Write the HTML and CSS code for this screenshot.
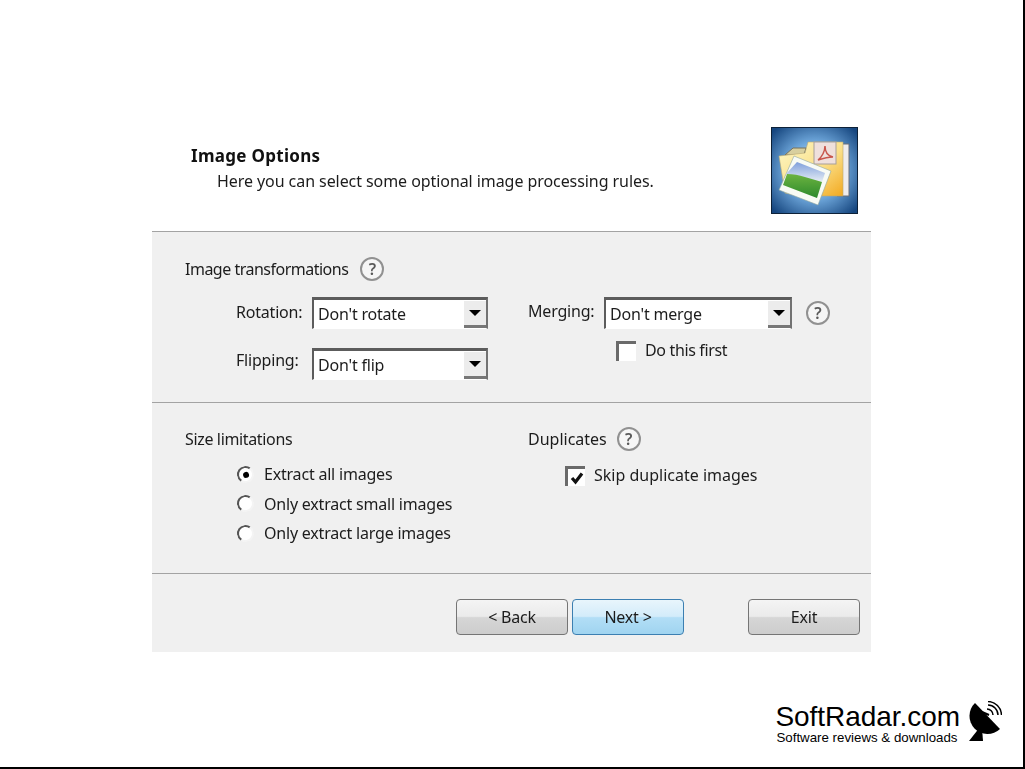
FILE: index.html
```html
<!DOCTYPE html>
<html lang="en">
<head>
<meta charset="utf-8">
<title>Image Options</title>
<link rel="stylesheet" href="styles.css">
</head>
<body>
<div class="page">
  <main class="dialog">
    <header class="head">
      <div class="head-text">
        <h1 class="title">Image Options</h1>
        <p class="subtitle">Here you can select some optional image processing rules.</p>
      </div>
      <svg class="app-icon" viewBox="0 0 87 87" aria-hidden="true">
        <defs>
          <radialGradient id="bg" cx="50%" cy="50%" r="66%">
            <stop offset="0" stop-color="#e4f0fa"/>
            <stop offset="0.5" stop-color="#6fa8dc"/>
            <stop offset="1" stop-color="#16467f"/>
          </radialGradient>
          <linearGradient id="folder" x1="0" y1="0" x2="1" y2="1">
            <stop offset="0" stop-color="#fdf8c8"/>
            <stop offset="0.55" stop-color="#fbe08a"/>
            <stop offset="1" stop-color="#f2a920"/>
          </linearGradient>
          <linearGradient id="sky" x1="0" y1="0" x2="0" y2="1">
            <stop offset="0" stop-color="#7f9fdc"/>
            <stop offset="1" stop-color="#e6eef4"/>
          </linearGradient>
          <linearGradient id="grass" x1="0" y1="0" x2="0" y2="1">
            <stop offset="0" stop-color="#6cb340"/>
            <stop offset="1" stop-color="#2d8a2c"/>
          </linearGradient>
        </defs>
        <rect x="0.5" y="0.5" width="86" height="86" fill="url(#bg)" stroke="#0d2138"/>
        <path d="M70 17h8v52H66z" fill="#efecec" stroke="#6b6f78" stroke-width="1"/>
        <path d="M14 28l8-7h13l-2 7z" fill="#d8cf9e" stroke="#77705a" stroke-width="1"/>
        <path d="M8 29L34 26l3-11h35v54H30L14 66z" fill="url(#folder)" stroke="#b8aa74" stroke-width="0.6"/>
        <rect x="43" y="15" width="22" height="22" fill="#efe0dc" stroke="#a89f9a"/>
        <path d="M47 33c4-3 7-9 7-14 0 6 3 10 8 11-4 0-9 1-15 3z" fill="none" stroke="#c8564c" stroke-width="1.500"/>
        <path d="M23 29L60 44 47 78 8 63z" fill="#f8fbf4" stroke="#8fa6a0" stroke-width="0.6"/>
        <path d="M26 35L54 46 51 55 15 47z" fill="url(#sky)"/>
        <path d="M16 47C28 47 40 52 51 55L46 71 12 58z" fill="url(#grass)"/>
      </svg>
    </header>

    <section class="panel panel-top">
      <div class="col">
        <div class="heading"><span class="tight-l">Image transformations</span><span class="help">?</span></div>
        <div class="fields">
          <span class="lbl">Rotation:</span>
          <div class="combo combo-s"><span class="combo-val">Don't rotate</span><span class="combo-btn"></span></div>
          <span class="lbl lbl-up">Flipping:</span>
          <div class="combo combo-s"><span class="combo-val">Don't flip</span><span class="combo-btn"></span></div>
        </div>
      </div>
      <div class="col col-merge">
        <div class="merge-row">
          <span class="lbl lbl-merge">Merging:</span>
          <div class="combo combo-m"><span class="combo-val">Don't merge</span><span class="combo-btn"></span></div>
          <span class="help help-merge">?</span>
        </div>
        <div class="check check-first"><span class="box"></span><span class="tight-m">Do this first</span></div>
      </div>
    </section>

    <section class="panel panel-mid">
      <div class="col">
        <div class="heading"><span class="tight-m">Size limitations</span></div>
        <div class="radios">
          <div class="radio"><span class="dot on"></span><span>Extract all images</span></div>
          <div class="radio"><span class="dot"></span><span>Only extract small images</span></div>
          <div class="radio"><span class="dot"></span><span>Only extract large images</span></div>
        </div>
      </div>
      <div class="col">
        <div class="heading heading-dup"><span class="natural">Duplicates</span><span class="help">?</span></div>
        <div class="check check-dup">
          <span class="box">
            <svg class="tick" viewBox="0 0 14 14" aria-hidden="true"><path d="M2 7l3.500 4L12 2.500" fill="none" stroke="#111" stroke-width="3.200"/></svg>
          </span>
          <span class="natural">Skip duplicate images</span>
        </div>
      </div>
    </section>

    <footer class="actions">
      <button class="btn">&lt; Back</button>
      <button class="btn btn-primary">Next &gt;</button>
      <button class="btn btn-exit">Exit</button>
    </footer>
  </main>

  <div class="brand">
    <div class="brand-text">
      <div class="brand-name">SoftRadar.com</div>
      <div class="brand-tag">Software reviews &amp; downloads</div>
    </div>
    <svg class="dish" viewBox="0 0 34 41" aria-hidden="true">
      <path d="M7 2A18 18 0 0 0 32 28Z" fill="#000"/>
      <path d="M12 26L1 40H15L14 27z" fill="#000"/>
      <path d="M14 11L21 14" stroke="#000" stroke-width="2"/>
      <g fill="none" stroke="#000" stroke-width="1.500">
        <path d="M19 8a6 6 0 0 1 6 6"/>
        <path d="M20 4a10 10 0 0 1 10 10"/>
        <path d="M20 0.500a14 14 0 0 1 13.500 13.500"/>
      </g>
    </svg>
  </div>
</div>
</body>
</html>
```

FILE: styles.css
```css
* { box-sizing: border-box; }
html, body { margin: 0; padding: 0; }
body {
  background: #fff;
  color: #1c1c1c;
  font-family: "Noto Sans", "Liberation Sans", sans-serif;
  font-size: 16px;
}
.page {
  width: 1025px;
  height: 769px;
  padding-top: 118px;
  border-right: 2px solid #000;
  border-bottom: 2px solid #000;
  overflow: hidden;
}
.dialog {
  width: 719px;
  margin-left: 152px;
  background: #f0f0f0;
  filter: blur(0.4px);
  letter-spacing: -0.2px;
}
.head {
  height: 114px;
  padding: 9px 13px 0 39px;
  background: #fff;
  border-bottom: 1px solid #a3a3a3;
  display: flex;
  justify-content: space-between;
  align-items: flex-start;
}
.title {
  margin: 18px 0 0;
  font-size: 17px;
  line-height: 22px;
  font-weight: 700;
  letter-spacing: 0.3px;
  color: #111;
}
.subtitle {
  margin: 4px 0 0 26px;
  line-height: 20px;
  letter-spacing: -0.07px;
}
.app-icon { width: 87px; height: 87px; flex: none; }

.panel {
  display: grid;
  grid-template-columns: 343px 1fr;
  padding: 26px 0 0 33px;
  border-bottom: 1px solid #a3a3a3;
}
.panel-top { height: 171px; }
.panel-mid { height: 171px; padding-top: 25px; }

.heading {
  height: 22px;
  line-height: 22px;
  display: flex;
  align-items: center;
  gap: 12px;
}
.heading-dup { gap: 10px; }
.tight-l { letter-spacing: -0.5px; }
.tight-m { letter-spacing: -0.35px; }
.natural { letter-spacing: 0; }
.help {
  width: 24px;
  height: 24px;
  flex: none;
  border: 2px solid #919191;
  border-radius: 50%;
  background: #f6f6f6;
  color: #5a5a5a;
  font-weight: 600;
  font-size: 16px;
  line-height: 20px;
  letter-spacing: 0;
  text-align: center;
}

.fields {
  margin: 17px 0 0 51px;
  display: grid;
  grid-template-columns: 76px 176px;
  grid-auto-rows: 32px;
  row-gap: 19px;
  align-items: center;
}
.lbl { padding-bottom: 2px; }
.lbl-up { padding-bottom: 8px; }

.combo {
  height: 32px;
  display: flex;
  align-items: center;
  justify-content: space-between;
  background: #fff;
  border-style: solid;
  border-width: 3px 2px 1px 2px;
  border-color: #5c5c5c #727272 #fff #5c5c5c;
  padding-left: 4px;
}
.combo-s { width: 176px; }
.combo-m { width: 188px; }
.combo-val { line-height: 26px; }
.combo-btn {
  width: 22px;
  height: 27px;
  background: #ececec;
  border-bottom: 3px solid #777;
  display: flex;
  align-items: center;
  justify-content: center;
}
.combo-btn::after {
  content: "";
  border-style: solid;
  border-width: 6px 6px 0;
  border-color: #000 transparent transparent;
}

.col-merge { padding-top: 39px; }
.merge-row {
  display: grid;
  grid-template-columns: 76px 188px 24px;
  align-items: center;
}
.lbl-merge { padding-bottom: 5px; }
.help-merge { margin-left: 14px; }

.check {
  display: flex;
  align-items: center;
  gap: 9px;
  line-height: 22px;
}
.check-first { margin: 10px 0 0 88px; }
.check-dup { margin: 14px 0 0 37px; }
.box {
  width: 20px;
  height: 20px;
  flex: none;
  display: flex;
  align-items: center;
  justify-content: center;
  background: #fff;
  border-style: solid;
  border-width: 3px 0 0 3px;
  border-color: #6a6a6a;
}
.check > span:last-child { padding-bottom: 2px; }
.tick { width: 14px; height: 14px; }

.radios {
  margin: 13px 0 0 52px;
  display: flex;
  flex-direction: column;
  gap: 7.500px;
}
.radio {
  height: 22px;
  display: flex;
  align-items: center;
  gap: 10px;
}
.dot {
  width: 17px;
  height: 17px;
  flex: none;
  border-radius: 50%;
  background: #fff;
  border: 2.500px solid;
  border-color: #555 #f4f4f4 #f4f4f4 #555;
  transform: rotate(-10deg);
  display: flex;
  align-items: center;
  justify-content: center;
}
.dot.on::after {
  content: "";
  width: 6px;
  height: 6px;
  border-radius: 50%;
  background: #000;
}

.actions {
  height: 78px;
  padding: 25px 11px 0 304px;
  display: flex;
  align-items: flex-start;
  gap: 4px;
}
.btn {
  width: 112px;
  height: 36px;
  padding: 0;
  font: inherit;
  letter-spacing: -0.2px;
  color: #1c1c1c;
  border: 1px solid #757575;
  border-radius: 4px;
  background: linear-gradient(#f4f4f4, #ebebeb 48%, #d6d6d6 52%, #cdcdcd);
}
.btn-primary {
  border-color: #3c7fb1;
  background: linear-gradient(#e8f5fc, #d3ecfa 48%, #b2def6 52%, #a0d4f0);
}
.btn-exit { margin-left: 60px; }

.brand {
  margin-top: 49px;
  padding-right: 21px;
  display: flex;
  justify-content: flex-end;
  align-items: flex-start;
  gap: 8px;
  color: #000;
  font-family: "Liberation Sans", Arial, sans-serif;
}
.brand-text { padding-top: 2px; }
.brand-name { font-size: 28px; line-height: 28px; letter-spacing: -0.05px; }
.brand-tag { font-size: 13.300px; line-height: 14px; padding-left: 1px; }
.dish { width: 34px; height: 41px; flex: none; }
```
